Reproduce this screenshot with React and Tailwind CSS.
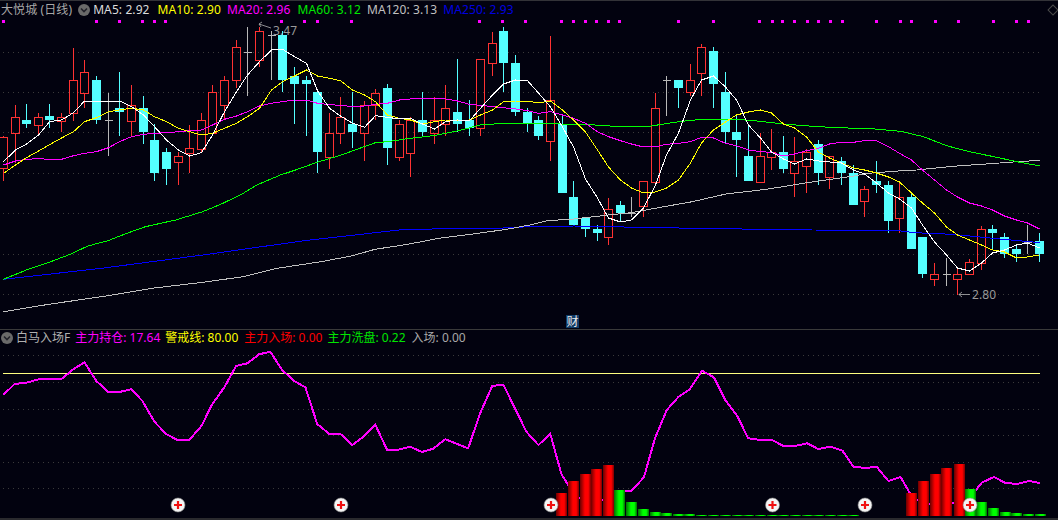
const X = (i) => Math.round(2.9 + 11.64 * i);
const z = (a) => a.map((v) => v / 3);

// [type, high, top, bottom, low] ; doji: ['D', high, mid, low]
const rawZ = [
  ['R',408,410,504,543],['R',315,350,398,490],['C',312,360,372,384],['R',340,350,374,405],['C',312,348,360,384],['R',340,350,362,396],
  ['R',145,241,338,362],['R',181,217,278,325],['C',228,241,360,372],['D',278,360,467],['C',217,325,336,408],['R',255,314,362,408],
  ['C',288,325,396,432],['C',372,420,518,543],['C',445,456,507,554],['R',456,468,485,554],['R',376,445,458,518],['R',340,361,446,458],
  ['R',255,277,398,405],['R',228,241,314,360],['R',120,142,241,264],['D',82,155,288],['R',82,94,180,202],['D',94,105,240],
  ['C',94,105,240,276],['C',202,228,252,372],['C',228,241,252,408],['C',276,276,456,518],['R',340,398,470,507],['R',291,350,398,432],
  ['C',276,372,396,445],['R',304,314,398,483],['R',266,278,314,360],['C',252,264,444,495],['R',360,372,470,483],['R',350,360,458,530],
  ['C',276,360,396,408],['R',291,361,398,432],['R',255,325,373,408],['C',178,336,372,396],['C',300,360,384,408],['R',178,178,385,408],
  ['R',96,130,190,228],['C',82,94,190,276],['C',165,190,336,348],['C',325,336,372,396],['C',348,360,408,420],
];
const rawR = [
  ['R',36,100,141,161],['C',116,124,193,193],['C',181,197,225,225],['C',218,218,229,237],['C',225,229,233,241],['R',198,209,237,245],
  ['C',201,205,213,221],['D',197,213,217],['R',181,181,206,217],['R',93,108,182,182],['D',76,80,116],['C',80,80,88,108],['R',64,80,92,96],
  ['R',44,47,73,96],['C',47,51,84,108],['C',72,92,132,143],['C',116,132,140,177],['C',124,156,181,181],['R',133,156,182,182],['R',129,152,157,170],
  ['C',136,152,169,173],['R',137,161,173,197],['R',149,152,166,193],['C',140,144,173,185],['R',156,156,177,189],['C',157,161,173,185],
  ['C',165,173,205,205],['R',186,189,201,217],['C',161,181,185,193],['C',181,185,221,233],['R',181,197,218,233],['C',193,197,249,249],
  ['C',237,237,274,278],['R',263,274,279,286],['D',258,274,286],['R',267,274,279,295],['R',259,262,274,274],['R',226,229,263,270],
  ['C',225,229,233,250],['C',233,237,254,258],['C',245,249,254,262],['D',225,242,254],['C',233,241,254,262],
];
const candles = [...rawZ.map((c) => [c[0], ...z(c.slice(1))]), ...rawR];

const ma5 = [...z([485,450,432,405,365,360,338,303,303,303,303,320,345,380,420,450,468,458,405,335,275,225,185,150,148,170,190,272,325,348,370,382,347,352,357,355,372,387,365,360,362,325,285,252,240,242]),
  93,107,127,147,179,198,218,222,220,208,185,155,133,100,80,76,87,100,125,138,152,159,164,159,161,162,163,170,174,183,193,199,208,225,242,255,268,271,263,253,250,245,243,248];
const ma10 = [...z([520,495,473,453,434,414,395,365,353,335,330,325,330,350,365,385,395,405,400,385,370,350,325,270,245,228,210,228,235,242,270,285,305,345,355,360,372,365,360,360,360,345,330,305,303,303]),
  103,101,110,120,132,150,167,180,188,193,192,188,180,163,143,130,122,115,112,110,113,124,128,137,152,158,163,168,170,173,177,182,193,203,213,227,235,240,245,250,252,258,257,255];
const ma20 = [...z([495,483,478,476,478,478,467,460,455,443,425,410,403,400,398,395,392,390,375,358,348,335,318,310,305,300,300,310,314,316,320,318,313,310,300,297,295,295,297,303,313,316,320,323,327,332]),
  ...z([340,335,345,355,370,395,410,422,432,441,440,433,430,425,412,414,430,437,450,455,457,468,462,452,445,432,427,427,422,422,440,460,480,510]),
  180,190,197,203,206,210,216,220,223,229];
const line = (a) => a.map((y, i) => `${X(i) + 0.5},${y.toFixed(1)}`).join(' ');
const pts = (a, xo, ky, yo) => a.map(([x, y]) => `${(xo + x / 2.96).toFixed(1)},${(yo + y / ky).toFixed(1)}`);
const ma60 = [
  ...pts([[10,328],[78,300],[150,275],[210,252],[260,228],[320,212],[370,192],[430,170],[520,150],[600,125],[660,100],[720,70],[760,45],[830,15],[875,0]], 0, 3, 170),
  ...pts([[939,487],[1010,465],[1078,440],[1111,428],[1146,425],[1214,415],[1282,407],[1353,393],[1421,375],[1490,370],[1558,370]], 0, 3, 0),
  ...pts([[25,370],[93,372],[180,374],[250,379],[353,379],[440,365],[509,358],[613,358],[681,364],[750,372],[853,380],[940,384],[1010,386],[1097,394],[1165,410],[1233,437],[1300,455],[1373,470],[1441,485],[1510,498]], 530, 3, 0),
].join(' ');
const ma120 = [
  ...pts([[10,425],[150,402],[300,380],[450,355],[600,337],[720,320],[820,295],[950,275],[1040,258],[1110,238],[1200,224],[1300,205],[1400,192],[1500,178],[1568,165]], 0, 3, 170),
  ...pts([[50,152],[130,147],[250,133],[300,128],[370,115],[480,95],[580,72],[700,58],[820,38],[960,18],[1000,10],[1100,2],[1145,0]], 530, 3, 170),
  ...pts([[1250,499],[1350,492],[1430,486],[1510,481]], 530, 3, 0),
].join(' ');
const ma250 = [
  ...pts([[10,328],[300,295],[600,255],[900,212],[1200,178],[1470,175],[1568,170]], 0, 3, 170),
  ...pts([[130,168],[320,172],[560,176],[835,180],[1080,181],[1140,188],[1250,193],[1400,208],[1510,218]], 530, 3, 170),
].join(' ');

const holding = [
  ...pts([[10,135],[43,102],[78,98],[114,88],[147,87],[182,87],[217,58],[250,37],[285,93],[320,125],[353,126],[388,118],[421,152],[457,215],[492,252],[525,270],[560,270],[596,228],[628,163],[664,112],[699,48],[732,40],[767,13],[800,5],[835,60],[871,93],[904,112],[939,222],[975,252],[1008,252],[1043,285],[1078,258],[1111,224],[1146,300],[1179,299],[1214,290],[1249,306],[1282,296],[1318,268],[1353,282],[1386,295],[1421,190],[1457,108],[1490,104],[1524,175],[1558,245]], 0, 3, 350),
  ...pts([[25,285],[60,252],[93,372],[128,430],[145,445],[180,445],[215,450],[265,425],[300,423],[337,382],[370,265],[405,180],[440,140],[473,118],[509,62],[544,82],[578,150],[613,197],[646,265],[681,270],[717,270],[750,288],[785,288],[820,280],[853,297],[889,290],[925,302],[957,350],[993,354],[1026,350],[1061,393],[1097,381],[1130,440],[1165,460],[1201,465],[1233,465],[1270,455],[1305,440],[1337,398],[1373,381],[1406,398],[1441,402],[1477,393],[1510,399]], 530, 3, 350),
].join(' ');

const marksZ1 = [8,283,351,419,455,489,832,900,937,1040,1418,1487,1553];
const marksZ2 = [91,127,162,195,231,263,438,542,679,715,747,782,819,851,887,923,1024,1095,1128,1199,1267,1371,1439,1475];
const marks = [...marksZ1.map((x) => x / 2.96), ...marksZ2.map((x) => 530 + x / 2.96)];

const mainGrid = [52, 92, 132, 173, 213, 254, 294];
const subGrid = [355, 382, 409, 435, 462, 488];

const redBars = [[93,429],[130,393],[164,372],[198,357],[233,345],[1130,429],[1165,393],[1201,372],[1233,354],[1270,342]];
const greenBars = [[265,420],[300,456],[337,477],[370,486],[405,489],[440,492],[473,492],
  ...[509,544,578,613,646,681,717,750,785,820,853,889,925,957].map((x) => [x, 495]),
  [1305,417],[1337,456],[1373,474],[1406,486],[1441,489],[1477,492],[1510,492]];
const plusAt = [178, 341, 551, 772.5, 865, 970];

function Chevron() {
  return (
    <svg width="12" height="12" viewBox="0 0 12 12" className="shrink-0">
      <circle cx="6" cy="6" r="6" fill="#6a6a6a" />
      <path d="M3 4.5 L6 7.5 L9 4.5" stroke="#22222a" strokeWidth="1.6" fill="none" />
    </svg>
  );
}

function Candle({ c, i }) {
  const cx = X(i);
  const w = cx + 0.5;
  if (c[0] === 'D') {
    return (
      <g stroke="#b8b8b8" shapeRendering="crispEdges">
        <line x1={w} x2={w} y1={c[1]} y2={c[3]} />
        <line x1={cx - 3.5} x2={cx + 4.5} y1={Math.round(c[2]) + 0.5} y2={Math.round(c[2]) + 0.5} />
      </g>
    );
  }
  const [t, hi, top, bot, lo] = c;
  const y = Math.round(top);
  const h = Math.max(Math.round(bot) - y, 1);
  if (t === 'C') {
    return (
      <g shapeRendering="crispEdges">
        <line x1={w} x2={w} y1={hi} y2={lo} stroke="#54ffff" />
        <rect x={cx - 4} y={y} width="9" height={h} fill="#54ffff" />
      </g>
    );
  }
  return (
    <g shapeRendering="crispEdges" stroke="#ff3232">
      <line x1={w} x2={w} y1={hi} y2={y} />
      <line x1={w} x2={w} y1={y + h} y2={lo} />
      <rect x={cx - 3.5} y={y + 0.5} width="8" height={h} fill="none" />
    </g>
  );
}

function Bar({ x, top, id }) {
  const real = 530 + x / 2.96;
  const y = 350 + top / 3;
  return <rect x={Math.round(real - 5.5)} y={y} width="11" height={516 - y} fill={`url(#${id})`} shapeRendering="crispEdges" />;
}

function Plus({ x }) {
  return (
    <g>
      <circle cx={x} cy="505" r="7" fill="#f4f4f4" stroke="#8a8a8a" strokeWidth="0.6" />
      <path d={`M${x - 4} 505 H${x + 4} M${x} 501 V509`} stroke="#f01010" strokeWidth="2.2" />
    </g>
  );
}

const Item = ({ color, className = '', children }) => (
  <span className={`whitespace-nowrap ${color} ${className}`}>{children}</span>
);

export default function App() {
  return (
    <div className="relative w-[1058px] h-[520px] overflow-hidden flex flex-col bg-[#02020f] font-['Noto_Sans','Noto_Sans_CJK_SC',sans-serif] text-[12px] leading-[17px] tracking-[0.1px]">
      <div className="h-[18px] shrink-0 border-t border-[#333338] flex items-center pl-[1px]">
        <Item color="text-[#a8a8a8]">大悦城 (日线)</Item>
        <span className="ml-[6px]"><Chevron /></span>
        <Item color="text-[#dcdcdc]" className="ml-[3px]">MA5: 2.92</Item>
        <Item color="text-[#ffff00]" className="ml-[8px]">MA10: 2.90</Item>
        <Item color="text-[#ff00ff]" className="ml-[6px]">MA20: 2.96</Item>
        <Item color="text-[#00e600]" className="ml-[7px]">MA60: 3.12</Item>
        <Item color="text-[#c0c0c0]" className="ml-[6px]">MA120: 3.13</Item>
        <Item color="text-[#0000e0]" className="ml-[6px]">MA250: 2.93</Item>
      </div>

      <svg width="1058" height="311" viewBox="0 18 1058 311" className="block shrink-0">
        {mainGrid.map((y) => (
          <line key={y} x1="3" x2="1040" y1={y + 0.5} y2={y + 0.5} stroke="#3a3a3a" strokeDasharray="1 4" shapeRendering="crispEdges" />
        ))}
        {marks.map((x, i) => (
          <rect key={i} x={Math.round(x) - 1} y="20" width="3" height="3" fill="#ff00ff" />
        ))}
        {candles.map((c, i) => <Candle key={i} c={c} i={i} />)}
        <g fill="none" strokeWidth="1" shapeRendering="crispEdges">
          <polyline points={ma250} stroke="#0000ff" />
          <polyline points={ma120} stroke="#c0c0c0" />
          <polyline points={ma60} stroke="#00ff00" />
          <polyline points={line(ma20)} stroke="#ff00ff" />
          <polyline points={line(ma10)} stroke="#ffff00" />
          <polyline points={line(ma5)} stroke="#ffffff" />
        </g>
        <path d="M259 24 L271 28 M259 24 L262 22 M259 24 L261 27" stroke="#b0b0b0" fill="none" strokeWidth="0.8" />
        <text x="273" y="35" fill="#9a9a9a" fontSize="12">3.47</text>
        <path d="M959 294.5 H970 M959 294.5 L962 292 M959 294.5 L962 297" stroke="#b0b0b0" fill="none" strokeWidth="0.8" />
        <text x="972" y="299" fill="#9a9a9a" fontSize="12">2.80</text>
        <rect x="566" y="315" width="13" height="13" fill="#0f3a66" />
        <text x="566.5" y="326" fill="#e8e8e8" fontSize="12">财</text>
      </svg>

      <div className="h-[19px] shrink-0 border-t border-[#3a3a3a] flex items-center pl-[1px] pb-[3px] tracking-normal">
        <Chevron />
        <Item color="text-[#b0b0b0]" className="ml-[3px]">白马入场F</Item>
        <Item color="text-[#ff00ff]" className="ml-[5px]">主力持仓: 17.64</Item>
        <Item color="text-[#ffff00]" className="ml-[5px]">警戒线: 80.00</Item>
        <Item color="text-[#ff0000]" className="ml-[6px]">主力入场: 0.00</Item>
        <Item color="text-[#00e600]" className="ml-[5px]">主力洗盘: 0.22</Item>
        <Item color="text-[#a8a8a8]" className="ml-[6px]">入场: 0.00</Item>
      </div>

      <svg width="1058" height="170" viewBox="0 348 1058 170" className="block shrink-0">
        <defs>
          <linearGradient id="redBar" x1="0" x2="1" y1="0" y2="0">
            <stop offset="0" stopColor="#6a0000" />
            <stop offset="0.45" stopColor="#ff0000" />
            <stop offset="0.75" stopColor="#ff0000" />
            <stop offset="1" stopColor="#7a0000" />
          </linearGradient>
          <linearGradient id="greenBar" x1="0" x2="1" y1="0" y2="0">
            <stop offset="0" stopColor="#007000" />
            <stop offset="0.45" stopColor="#00ff00" />
            <stop offset="0.75" stopColor="#00ff00" />
            <stop offset="1" stopColor="#007000" />
          </linearGradient>
        </defs>
        {subGrid.map((y) => (
          <line key={y} x1="3" x2="1040" y1={y + 0.5} y2={y + 0.5} stroke="#3a3a3a" strokeDasharray="1 4" shapeRendering="crispEdges" />
        ))}
        <line x1="3" x2="1040" y1="373.5" y2="373.5" stroke="#ffff80" shapeRendering="crispEdges" />
        <polyline points={holding} fill="none" stroke="#ff00ff" strokeWidth="2" shapeRendering="crispEdges" />
        {redBars.map(([x, t]) => <Bar key={x} x={x} top={t} id="redBar" />)}
        {greenBars.map(([x, t]) => <Bar key={x} x={x} top={t} id="greenBar" />)}
        {plusAt.map((x) => <Plus key={x} x={x} />)}
      </svg>
      <div className="h-[2px] shrink-0 bg-[#2a2a2e]" />
      <div className="absolute left-[1049px] top-[6px] size-[8px] rotate-45 border border-[#4a4a4a]" />
    </div>
  );
}
